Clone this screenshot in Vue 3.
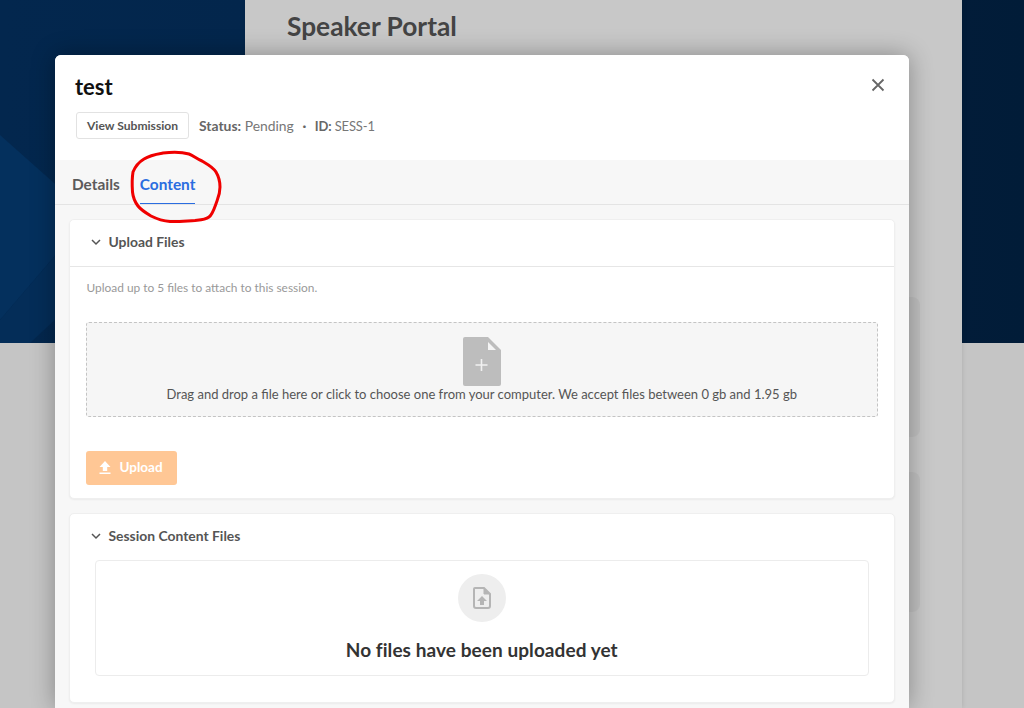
<script setup>
const tabs = [
  { label: 'Details', active: false },
  { label: 'Content', active: true }
]
</script>

<template>
  <div class="page">
    <svg class="hero-art" width="245" height="343" viewBox="0 0 245 343" aria-hidden="true">
      <polygon points="0,135 90,215 0,320" fill="#04305d" />
      <polygon points="0,320 90,215 130,250 30,343 0,343" fill="#042d58" />
    </svg>
    <main class="panel">
      <h1 class="portal-title">Speaker Portal</h1>
      <div class="ghost-card first"></div>
      <div class="ghost-card"></div>
    </main>
  </div>

  <section class="modal">
    <header class="modal-head">
      <h2 class="modal-title">test</h2>
      <div class="meta">
        <button class="view-btn">View Submission</button>
        <span class="meta-text"><b>Status:</b> Pending</span>
        <span class="dot">·</span>
        <span class="meta-id"><b>ID:</b> SESS-1</span>
      </div>
      <svg class="close" width="14" height="14" viewBox="0 0 14 14" aria-label="Close">
        <path d="M1.5 1.5 12.5 12.5M12.5 1.5 1.5 12.5" stroke="#666" stroke-width="1.8" fill="none" />
      </svg>
    </header>

    <nav class="tabs">
      <span v-for="t in tabs" :key="t.label" class="tab" :class="{ active: t.active }">{{ t.label }}</span>
    </nav>

    <div class="modal-body">
      <article class="card">
        <div class="card-head bordered">
          <svg class="chev" width="12" height="12" viewBox="0 0 12 12"><path d="M2 4 6 8 10 4" stroke="#555" stroke-width="1.5" fill="none" /></svg>
          <span>Upload Files</span>
        </div>
        <div class="upload-body">
          <p class="hint">Upload up to 5 files to attach to this session.</p>
          <div class="dropzone">
            <svg width="38" height="49" viewBox="0 0 38 49" class="drop-icon">
              <path d="M2 0H25L38 13V47a2 2 0 0 1-2 2H2a2 2 0 0 1-2-2V2a2 2 0 0 1 2-2Z" fill="#bdbdbd" />
              <path d="M25 5 33 13H25Z" fill="#f5f5f5" />
              <path d="M18.500 22V34M12.500 28H24.500" stroke="#f1f1f1" stroke-width="1.600" />
            </svg>
            <span>Drag and drop a file here or click to choose one from your computer. We accept files between 0 gb and 1.95 gb</span>
          </div>
          <button class="upload-btn">
            <svg width="12" height="13" viewBox="0 0 12 13"><path d="M6 0 11.500 6H8.200V10H3.800V6H.5ZM.5 11.400H11.500V13H.5Z" fill="#fff" /></svg>
            Upload
          </button>
        </div>
      </article>

      <article class="card files">
        <div class="card-head">
          <svg class="chev" width="12" height="12" viewBox="0 0 12 12"><path d="M2 4 6 8 10 4" stroke="#555" stroke-width="1.5" fill="none" /></svg>
          <span>Session Content Files</span>
        </div>
        <div class="empty">
          <div class="empty-circle">
            <svg width="18" height="22" viewBox="0 0 18 22">
              <path d="M2 1H11L17 7V19a2 2 0 0 1-2 2H3a2 2 0 0 1-2-2V2a1 1 0 0 1 1-1Z" fill="none" stroke="#b5b5b5" stroke-width="2" />
              <path d="M11 1V7H17" fill="#b5b5b5" stroke="#b5b5b5" stroke-width="1" />
              <path d="M9 9 14 14H11V18H7V14H4Z" fill="#b5b5b5" />
            </svg>
          </div>
          <p class="empty-text">No files have been uploaded yet</p>
        </div>
      </article>
    </div>
  </section>

  <svg class="annotation" width="1024" height="708" viewBox="0 0 1024 708" aria-hidden="true">
    <path d="M163 153C172 152 182 152 189 154C194 156 197 159 202 161C207 164 213 167 216 172C219 177 220 182 220 187C220 192 219 196 217 201C215 206 213 214 209 217C205 220 200 220 195 220.500C186 221 177 222 170 221.500C163 221 157 219 151 216C146 213 141 210 138 206C135 202 133 197 132.500 192C132 185 132 178 133 172C135 167 139 162 144 159C150 155 157 154 163 153Z" fill="none" stroke="#f00000" stroke-width="3" />
  </svg>
</template>

<style>
html, body { margin: 0; background: #c5c5c5; overflow: hidden; }
</style>

<style scoped>
.page {
  position: relative;
  height: 708px;
  overflow: hidden;
  display: flex;
  justify-content: flex-end;
  padding-right: 62px;
  box-sizing: border-box;
  background:
    linear-gradient(90deg, #03274e 0, #03264c 245px, #021c39 962px, #011c38 100%) 0 0 / 100% 343px no-repeat,
    #c5c5c5;
  font-family: Lato, "Open Sans", sans-serif;
}
.hero-art { position: absolute; left: 0; top: 0; }
.panel {
  width: 717px;
  box-sizing: border-box;
  background: #c8c8c8;
  padding: 12px 42px 0;
  display: flex;
  flex-direction: column;
  box-shadow: 0 0 5px rgba(0, 0, 0, .12);
}
.portal-title {
  margin: 0;
  font-size: 26.300px;
  line-height: 29px;
  font-weight: 700;
  color: #444;
}
.ghost-card {
  height: 140px;
  border-radius: 8px;
  background: #c0c0c0;
  margin-bottom: 35px;
}
.ghost-card.first { margin-top: 256px; }

.modal {
  position: absolute;
  left: 55px;
  top: 55px;
  width: 854px;
  height: 653px;
  overflow: hidden;
  border-radius: 6px 6px 0 0;
  background: #f7f7f7;
  font-family: Lato, "Open Sans", sans-serif;
  box-shadow: 0 0 24px rgba(0, 0, 0, .32);
}
.modal-head {
  position: relative;
  height: 105px;
  box-sizing: border-box;
  background: #fff;
  padding: 18px 20px 0;
}
.modal-title {
  margin: 0 0 11px;
  font-size: 22px;
  line-height: 28px;
  font-weight: 700;
  color: #111;
}
.meta {
  display: flex;
  align-items: center;
  font-size: 13.900px;
  color: #777;
}
.view-btn {
  width: 113px;
  height: 27px;
  padding: 0 0 1px;
  margin: 0 10px 0 1px;
  background: #fff;
  border: 1px solid #e2e2e2;
  border-radius: 3px;
  font: 700 12.100px Lato, "Open Sans", sans-serif;
  color: #555;
}
.meta-text b, .meta-id b { color: #666; font-weight: 700; }
.dot { width: 21px; text-align: center; color: #666; font-weight: 700; }
.meta-id { font-size: 13px; letter-spacing: -.15px; }
.close { position: absolute; right: 24px; top: 22.500px; }

.tabs {
  height: 45px;
  box-sizing: border-box;
  display: flex;
  gap: 20px;
  padding-left: 17px;
  border-bottom: 1px solid #e4e4e4;
}
.tab {
  font-size: 15.400px;
  font-weight: 700;
  color: #5b5b5b;
  line-height: 48px;
  height: 44px;
  box-sizing: border-box;
}
.tab.active {
  color: #2a6de0;
  border-bottom: 1px solid #2a6de0;
}

.modal-body {
  padding: 14px 14px 0 13.500px;
  display: flex;
  flex-direction: column;
  gap: 14px;
}
.card {
  background: #fff;
  border: 1px solid #efefef;
  border-radius: 5px;
  box-sizing: border-box;
  box-shadow: 0 1px 2px rgba(0, 0, 0, .05);
}
.card-head {
  height: 46px;
  box-sizing: border-box;
  display: flex;
  align-items: center;
  gap: 7px;
  padding: 0 0 3px 20px;
  font-size: 13.900px;
  font-weight: 700;
  color: #555;
}
.card-head.bordered { border-bottom: 1px solid #e6e6e6; height: 47px; }
.upload-body { padding: 0 16px 13px; }
.hint {
  margin: 14px 0 27px 1px;
  font-size: 11.900px;
  line-height: 14px;
  color: #999;
}
.dropzone {
  height: 95px;
  box-sizing: border-box;
  border: 1px dashed #c4c4c4;
  border-radius: 3px;
  background: #f6f6f6;
  display: flex;
  flex-direction: column;
  align-items: center;
  padding-top: 14px;
  font-size: 13px;
  line-height: 16px;
  color: #555;
}
.upload-btn {
  display: flex;
  align-items: center;
  justify-content: center;
  gap: 8px;
  width: 91px;
  height: 34px;
  margin-top: 34px;
  padding: 0 0 2px 0;
  border: 0;
  border-radius: 3px;
  background: #ffc795;
  color: #fff;
  font: 700 13.500px Lato, "Open Sans", sans-serif;
}
.files { height: 190px; }
.empty {
  margin: 0 25px;
  height: 116px;
  box-sizing: border-box;
  border: 1px solid #ececec;
  border-radius: 4px;
  display: flex;
  flex-direction: column;
  align-items: center;
  padding-top: 13px;
}
.empty-circle {
  width: 48px;
  height: 48px;
  border-radius: 50%;
  background: #eeeeee;
  display: flex;
  align-items: center;
  justify-content: center;
}
.empty-text {
  margin: 16px 0 0;
  font-size: 19px;
  line-height: 24px;
  font-weight: 700;
  letter-spacing: .07px;
  color: #333;
}
.annotation { position: absolute; left: 0; top: 0; pointer-events: none; }
</style>
